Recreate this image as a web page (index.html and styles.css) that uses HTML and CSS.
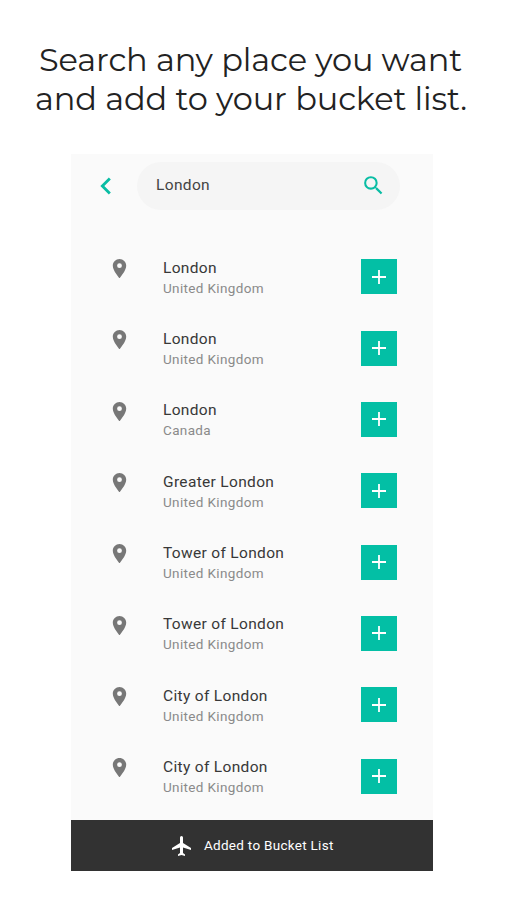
FILE: index.html
```html
<!DOCTYPE html>
<html lang="en">
<head>
<meta charset="utf-8">
<title>Bucket list search</title>
<link rel="stylesheet" href="styles.css">
</head>
<body>
<svg class="defs" aria-hidden="true">
<symbol id="pin" viewBox="0 0 24 24"><path d="M12 2C8.13 2 5 5.13 5 9c0 5.25 7 13 7 13s7-7.75 7-13c0-3.870-3.130-7-7-7zm0 9.500a2.500 2.500 0 1 1 0-5 2.500 2.500 0 0 1 0 5z"/></symbol>
<symbol id="plus" viewBox="0 0 24 24"><path d="M19 12.900h-6.100v6.100h-1.800v-6.100H5v-1.800h6.100V5h1.800v6.100H19z"/></symbol>
</svg>
<h1 class="headline"><span class="line first">Search any place you want</span><span class="line second">and add to your bucket list.</span></h1>
<main class="phone">
<header class="top">
<svg class="back" viewBox="0 0 24 24"><path d="M15.410 7.410 14 6l-6 6 6 6 1.410-1.410L10.830 12z"/></svg>
<div class="search"><span class="query">London</span>
<svg class="glass" viewBox="0 0 24 24"><path d="M15.500 14h-.79l-.28-.27A6.471 6.471 0 0 0 16 9.500 6.500 6.500 0 1 0 9.500 16c1.610 0 3.090-.59 4.230-1.570l.27.28v.79l5 4.990L20.490 19l-4.990-5zm-6 0C7.010 14 5 11.990 5 9.500S7.010 5 9.500 5 14 7.010 14 9.500 11.990 14 9.500 14z"/></svg></div>
</header>
<ul class="results">
<li class="row"><svg class="pin"><use href="#pin"/></svg><div class="place"><div class="name"><span>London</span></div><div class="country"><span>United Kingdom</span></div></div><button class="add"><svg><use href="#plus"/></svg></button></li>
<li class="row"><svg class="pin"><use href="#pin"/></svg><div class="place"><div class="name"><span>London</span></div><div class="country"><span>United Kingdom</span></div></div><button class="add"><svg><use href="#plus"/></svg></button></li>
<li class="row"><svg class="pin"><use href="#pin"/></svg><div class="place"><div class="name"><span>London</span></div><div class="country"><span>Canada</span></div></div><button class="add"><svg><use href="#plus"/></svg></button></li>
<li class="row"><svg class="pin"><use href="#pin"/></svg><div class="place"><div class="name"><span>Greater London</span></div><div class="country"><span>United Kingdom</span></div></div><button class="add"><svg><use href="#plus"/></svg></button></li>
<li class="row"><svg class="pin"><use href="#pin"/></svg><div class="place"><div class="name"><span>Tower of London</span></div><div class="country"><span>United Kingdom</span></div></div><button class="add"><svg><use href="#plus"/></svg></button></li>
<li class="row"><svg class="pin"><use href="#pin"/></svg><div class="place"><div class="name"><span>Tower of London</span></div><div class="country"><span>United Kingdom</span></div></div><button class="add"><svg><use href="#plus"/></svg></button></li>
<li class="row"><svg class="pin"><use href="#pin"/></svg><div class="place"><div class="name"><span>City of London</span></div><div class="country"><span>United Kingdom</span></div></div><button class="add"><svg><use href="#plus"/></svg></button></li>
<li class="row"><svg class="pin"><use href="#pin"/></svg><div class="place"><div class="name"><span>City of London</span></div><div class="country"><span>United Kingdom</span></div></div><button class="add"><svg><use href="#plus"/></svg></button></li>
</ul>
<footer class="toast">
<svg class="plane" viewBox="0 0 24 24"><path d="M21 16v-2l-8-5V3.500a1.500 1.500 0 0 0-3 0V9l-8 5v2l8-2.500V19l-2 1.500V22l3.500-1 3.500 1v-1.500L13 19v-5.500l8 2.500z"/></svg>
<span class="message">Added to Bucket List</span>
</footer>
</main>
</body>
</html>
```

FILE: styles.css
```css
* { box-sizing: border-box; }
body { margin: 0; height: 900px; overflow: hidden; background: #fff; font-family: Roboto, sans-serif; }
.defs { display: none; }
.headline { margin: 0; padding-top: 40px; height: 154px; font: 400 32px/39px "Montserrat", "Open Sans", sans-serif; color: #222; }
.line { display: block; width: max-content; white-space: nowrap; }
.first { margin-left: 39px; letter-spacing: -.1px; }
.second { margin-left: 35px; letter-spacing: -.1px; }
.phone { width: 362px; height: 717px; margin-left: 71px; background: #fafafa; display: flex; flex-direction: column; }
.top { display: flex; align-items: center; height: 63px; flex: none; }
.back { width: 34px; height: 34px; margin-left: 18px; fill: #09bda4; }
.search { display: flex; align-items: center; justify-content: space-between; width: 263px; height: 48px; margin-left: 14px; padding: 0 14px 0 19px; border-radius: 24px; background: #f5f5f5; }
.query { font-size: 15.5px; line-height: 20px; padding-bottom: 2px; letter-spacing: .35px; color: #444; }
.glass { width: 25px; height: 25px; fill: #09bda4; }
.results { margin: 0; padding: 24px 0 0; list-style: none; flex: 1; }
.row { display: flex; height: 71.350px; padding: 15px 36px 0 37px; }
.pin { width: 23px; height: 23px; margin-top: 1px; fill: #777; }
.place { flex: 1; margin-left: 32px; padding-top: .5px; }
.name { font-size: 15.5px; line-height: 22px; letter-spacing: .33px; color: #383838; }
.country { font-size: 13.5px; line-height: 18px; letter-spacing: .35px; color: #8a8a8a; }
.add { width: 36px; height: 35px; margin-top: 3.2px; padding: 5.5px 6px; border: 0; background: #03bfa5; }
.add svg { display: block; width: 24px; height: 24px; fill: #fff; }
.toast { display: flex; align-items: center; height: 51px; flex: none; padding-left: 99px; background: #323232; color: #fff; font-size: 13.5px; letter-spacing: .28px; }
.message { padding-bottom: 1px; }
.plane { width: 24px; height: 24px; margin-right: 10px; fill: #fff; }
```
